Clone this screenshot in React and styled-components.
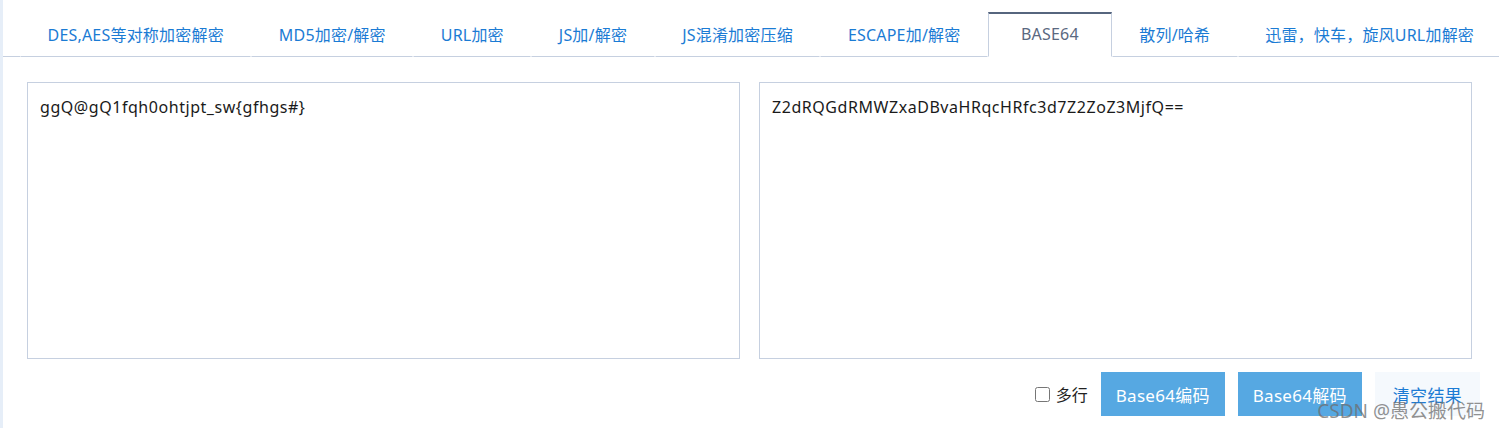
import React, { useState } from "react";
import styled, { createGlobalStyle } from "styled-components";

const FONT = `"Noto Sans", "Noto Sans CJK SC", sans-serif`;

const Global = createGlobalStyle`
  html, body { margin: 0; padding: 0; background: #fff; }
  body {
    font-family: ${FONT};
    border-left: 3px solid #e6eef8;
    min-height: 428px;
    box-sizing: border-box;
  }
  * { box-sizing: border-box; }
`;

const Page = styled.div`
  position: relative;
  width: 1496px;
  height: 428px;
  overflow: hidden;
`;

const TabBar = styled.ul`
  display: flex;
  list-style: none;
  margin: 0;
  padding: 12px 0 0 17px;
  height: 57px;
  border-bottom: 1px solid #c6d0e0;
`;

const Tab = styled.li`
  height: 45px;
  padding: 0 ${(p) => (p.$active ? 32 : 26.5)}px 2px;
  margin-bottom: -1px;
  display: flex;
  align-items: center;
  font-size: 16px;
  letter-spacing: 0.2px;
  white-space: nowrap;
  cursor: pointer;
  color: ${(p) => (p.$active ? "#5a6880" : "#1b7bd4")};
  background: #fff;
  border-top: 2px solid ${(p) => (p.$active ? "#56657e" : "transparent")};
  border-left: 1px solid ${(p) => (p.$active ? "#c6d0e0" : "transparent")};
  border-right: 1px solid ${(p) => (p.$active ? "#c6d0e0" : "transparent")};
  border-bottom: 1px solid ${(p) => (p.$active ? "#fff" : "#c6d0e0")};
`;

const Body = styled.div`
  padding: 25px 27px 0 24px;
`;

const Panels = styled.div`
  display: grid;
  grid-template-columns: 1fr 1fr;
  gap: 19px;
`;

const Area = styled.textarea`
  display: block;
  width: 100%;
  height: 277px;
  border: 1px solid #c6d0e0;
  border-radius: 0;
  resize: none;
  outline: none;
  padding: 13px 12px;
  font-family: ${FONT};
  font-size: 16px;
  letter-spacing: 0.55px;
  line-height: 22px;
  color: #1a1a1a;
  background: #fff;
`;

const Actions = styled.div`
  display: flex;
  justify-content: flex-end;
  align-items: center;
  gap: 13px;
  margin-top: 13px;
  margin-right: -8px;
`;

const CheckLabel = styled.label`
  display: flex;
  align-items: center;
  gap: 6px;
  font-size: 16px;
  color: #222;
`;

const Check = styled.input`
  width: 15px;
  height: 15px;
  margin: 0;
`;

const Button = styled.button`
  height: 44px;
  padding: 0 ${(p) => (p.$plain ? 18 : 12)}px;
  min-width: ${(p) => (p.$plain ? 100 : 124)}px;
  border: none;
  font-family: ${FONT};
  font-size: 17px;
  letter-spacing: 0.3px;
  cursor: pointer;
  background: ${(p) => (p.$plain ? "#f5f9fd" : "#56a8e2")};
  color: ${(p) => (p.$plain ? "#1b7bd4" : "#fff")};
`;

const Watermark = styled.div`
  position: absolute;
  right: 14px;
  bottom: 4px;
  font-family: ${FONT};
  font-size: 19px;
  color: rgba(110, 110, 110, 0.75);
  pointer-events: none;
  white-space: nowrap;
`;

const tabs = [
  "DES,AES等对称加密解密",
  "MD5加密/解密",
  "URL加密",
  "JS加/解密",
  "JS混淆加密压缩",
  "ESCAPE加/解密",
  "BASE64",
  "散列/哈希",
  "迅雷，快车，旋风URL加解密",
];

export default function App() {
  const [active, setActive] = useState(6);
  return (
    <Page>
      <Global />
      <TabBar>
        {tabs.map((t, i) => (
          <Tab key={t} $active={i === active} onClick={() => setActive(i)}>
            {t}
          </Tab>
        ))}
      </TabBar>
      <Body>
        <Panels>
          <Area defaultValue="ggQ@gQ1fqh0ohtjpt_sw{gfhgs#}" />
          <Area defaultValue="Z2dRQGdRMWZxaDBvaHRqcHRfc3d7Z2ZoZ3MjfQ==" />
        </Panels>
        <Actions>
          <CheckLabel>
            <Check type="checkbox" />
            多行
          </CheckLabel>
          <Button>Base64编码</Button>
          <Button>Base64解码</Button>
          <Button $plain>清空结果</Button>
        </Actions>
      </Body>
      <Watermark>CSDN @愚公搬代码</Watermark>
    </Page>
  );
}
